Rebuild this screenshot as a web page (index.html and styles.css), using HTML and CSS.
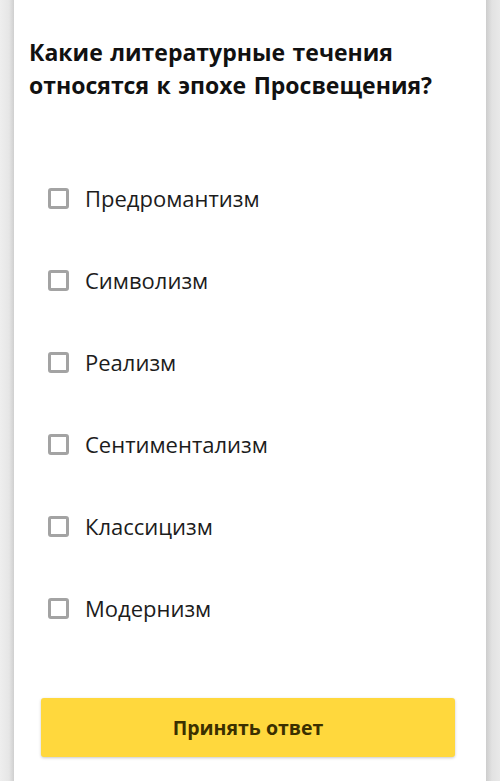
FILE: index.html
```html
<!DOCTYPE html>
<html lang="ru">
<head>
<meta charset="utf-8">
<link rel="stylesheet" href="styles.css">
</head>
<body>
<div class="frame">
  <div class="card">
    <h1 class="question">Какие литературные течения относятся к эпохе Просвещения?</h1>
    <ul class="options">
      <li class="option"><span class="box"></span><span class="label">Предромантизм</span></li>
      <li class="option"><span class="box"></span><span class="label">Символизм</span></li>
      <li class="option"><span class="box"></span><span class="label">Реализм</span></li>
      <li class="option"><span class="box"></span><span class="label">Сентиментализм</span></li>
      <li class="option"><span class="box"></span><span class="label">Классицизм</span></li>
      <li class="option"><span class="box"></span><span class="label">Модернизм</span></li>
    </ul>
    <button class="submit">Принять ответ</button>
  </div>
</div>
</body>
</html>
```
FILE: styles.css
```css
html, body {
  margin: 0;
  padding: 0;
  height: 100%;
}
body {
  font-family: "Open Sans", "Noto Sans", sans-serif;
  background: #ebebeb;
}
.frame {
  height: 781px;
  padding: 0 14px;
  box-sizing: border-box;
  background:
    linear-gradient(to right, #eeeeee 0, #e6e6e6 9px, #cfcfcf 14px, transparent 14px),
    linear-gradient(to left, #e9e9e9 0, #e2e2e2 8px, #cdcdcd 14px, transparent 14px);
  background-color: #ebebeb;
}
.card {
  background: #ffffff;
  height: 100%;
  padding: 36px 0 0 15px;
  box-sizing: border-box;
  display: flex;
  flex-direction: column;
}
.question {
  margin: 0;
  font-family: "Open Sans", "Noto Sans", sans-serif;
  font-size: 23px;
  line-height: 33px;
  font-weight: 700;
  color: #111111;
  width: 445px;
  word-spacing: 1.5px;
}
.options {
  list-style: none;
  margin: 55px 0 0 0;
  padding: 0;
}
.option {
  height: 82px;
  display: flex;
  align-items: center;
  padding-left: 19px;
}
.box {
  width: 21px;
  height: 21px;
  box-sizing: border-box;
  border: 3px solid #a3a3a3;
  border-radius: 3px;
  flex: none;
}
.label {
  margin-left: 16px;
  font-size: 22px;
  color: #1c1c1c;
}
.submit {
  margin: 49px 0 0 12px;
  width: 414px;
  height: 59px;
  border: none;
  border-radius: 3px;
  background: #ffd83d;
  box-shadow: 0 1px 3px rgba(0,0,0,0.22);
  font-family: "Open Sans", "Noto Sans", sans-serif;
  font-size: 19.5px;
  font-weight: 700;
  color: #3b3000;
}
```
